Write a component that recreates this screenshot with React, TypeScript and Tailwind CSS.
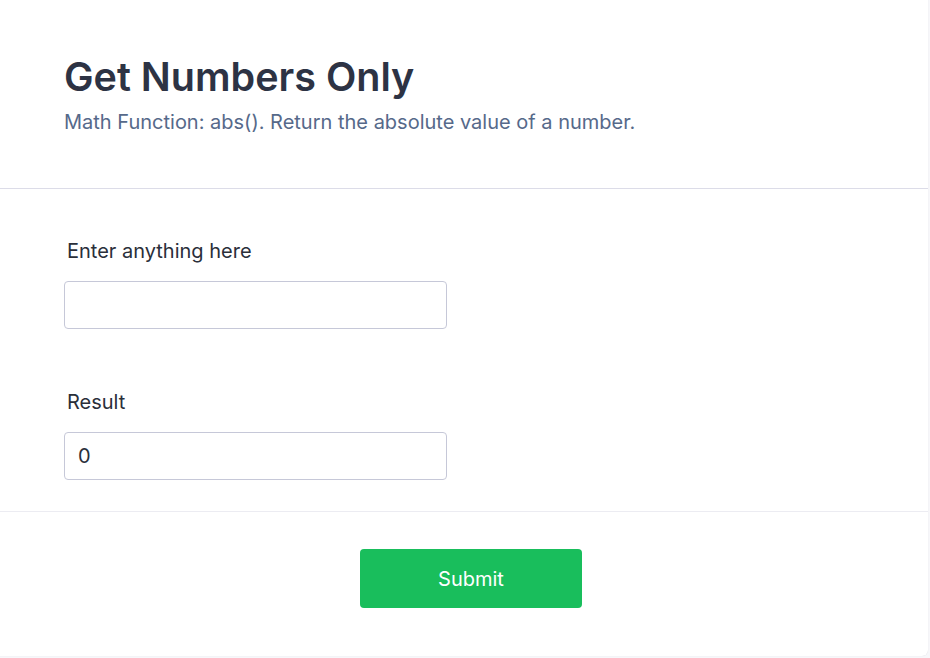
import React from "react";

export default function App() {
  return (
    <div className="w-[930px] h-[658px] bg-[#f7f7fa]" style={{ fontFamily: "Inter, 'Noto Sans', sans-serif" }}>
      <div className="w-[928px] h-[656px] bg-white rounded-br-md shadow-[0_0_1px_rgba(0,0,0,0.15)] flex flex-col">
        <div className="pl-[64px] pt-[53px] h-[189px] border-b border-[#dcdce8]">
          <h1 className="text-[39.5px] leading-[48px] font-semibold text-[#2d3344]">Get Numbers Only</h1>
          <p className="mt-[7px] text-[20px] leading-[28px] text-[#56698a]">Math Function: abs(). Return the absolute value of a number.</p>
        </div>
        <div className="pl-[64px] pt-[49px] h-[323px] border-b border-[#ececf2] flex flex-col">
          <label className="pl-[3px] text-[20px] leading-[26px] font-normal text-[#2a2f3a]">Enter anything here</label>
          <input className="mt-[17px] w-[383px] h-[48px] rounded-[4px] border border-[#c6c8d8] px-[13px] text-[20px] text-[#2a2f3a] outline-none" />
          <label className="mt-[60px] pl-[3px] text-[20px] leading-[26px] font-normal text-[#2a2f3a]">Result</label>
          <input readOnly value="0" className="mt-[17px] w-[383px] h-[48px] rounded-[4px] border border-[#c6c8d8] px-[13px] text-[20px] text-[#2a2f3a] outline-none" />
        </div>
        <div className="flex justify-center pt-[37px] pl-[14px]">
          <button className="w-[222px] h-[59px] rounded-[4px] bg-[#19be5c] text-white text-[20px] font-normal">Submit</button>
        </div>
      </div>
    </div>
  );
}
